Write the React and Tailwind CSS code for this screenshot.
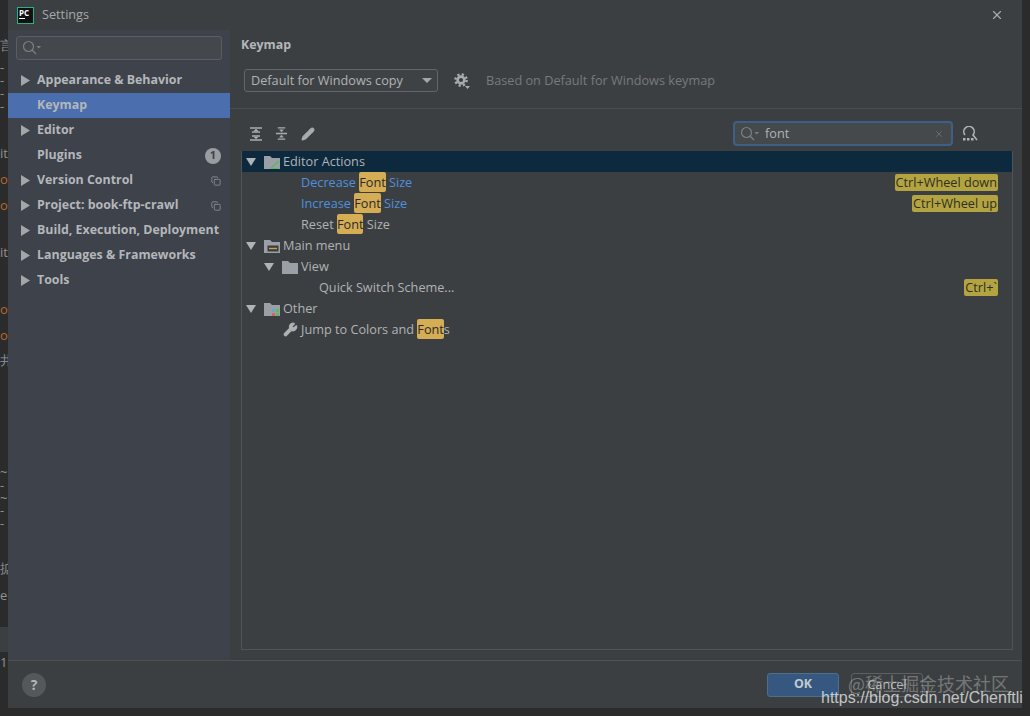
import React from 'react';
import { Copy, Pencil, Wrench, X } from 'lucide-react';

const FONT = { fontFamily: '"Open Sans", "Noto Sans", sans-serif' };

const sideItems = [
  { label: 'Appearance & Behavior', arrow: true },
  { label: 'Keymap', active: true },
  { label: 'Editor', arrow: true },
  { label: 'Plugins', badge: '1' },
  { label: 'Version Control', arrow: true, copy: true },
  { label: 'Project: book-ftp-crawl', arrow: true, copy: true },
  { label: 'Build, Execution, Deployment', arrow: true },
  { label: 'Languages & Frameworks', arrow: true },
  { label: 'Tools', arrow: true },
];

// bits of the editor that stick out left of the dialog, top to bottom
const editorBits = [
  { h: 37 },
  { h: 16, text: '言' },
  { h: 8 },
  { h: 13, text: '-' },
  { h: 13, text: '-' },
  { h: 13, text: '-' },
  { h: 13, text: '-' },
  { h: 32 },
  { h: 16, text: 'it' },
  { h: 10 },
  { h: 16, text: 'or', orange: true },
  { h: 10 },
  { h: 16, text: 'oa', orange: true },
  { h: 31 },
  { h: 16, text: 'it' },
  { h: 41 },
  { h: 16, text: 'or', orange: true },
  { h: 10 },
  { h: 16, text: 'oa', orange: true },
  { h: 9 },
  { h: 16, text: '井' },
  { h: 98 },
  { h: 13, text: '~' },
  { h: 13, text: '-' },
  { h: 13, text: '~' },
  { h: 11, text: '-' },
  { h: 14, text: '-' },
  { h: 30 },
  { h: 16, text: '掂' },
  { h: 11 },
  { h: 16, text: 'e' },
  { h: 24 },
  { h: 25, band: true },
  { h: 2 },
  { h: 16, text: '1' },
];

const Caret = ({ className }) => (
  <svg viewBox="0 0 10 10" preserveAspectRatio="none" className={className}>
    <path d="M0 0 L10 0 L5 10 Z" fill="currentColor" />
  </svg>
);

const CaretRight = () => (
  <svg viewBox="0 0 10 12" className="w-[9px] h-[11px] text-[#a4a7aa]">
    <path d="M0 0 L10 6 L0 12 Z" fill="currentColor" />
  </svg>
);

const SearchIcon = () => (
  <svg viewBox="0 0 20 16" className="w-[20px] h-[16px] text-[#7c7f82]" fill="none">
    <circle cx="6.5" cy="6.5" r="5" stroke="currentColor" strokeWidth="1.2" />
    <path d="M10 10 L14 14" stroke="currentColor" strokeWidth="1.2" />
    <path d="M14.5 6 L19 6 L16.75 8.5 Z" fill="currentColor" />
  </svg>
);

const FolderIcon = ({ children }) => (
  <svg viewBox="0 0 16 14" className="w-[16px] h-[14px]">
    <path d="M0 1 H6 L8 3 H16 V14 H0 Z" fill="#9aa0a6" />
    {children}
  </svg>
);

const Hl = ({ children }) => (
  <span className="bg-[#d4ad54] text-[#2b2b2b] rounded-[2px] py-[1px]">{children}</span>
);

const Row = ({ selected, arrowAt, iconAt, textAt, icon, children, shortcut }) => (
  <div className={`flex items-center h-[21px] ${selected ? 'bg-[#0d293e]' : ''}`}>
    <div className="w-[8px] shrink-0" style={{ marginLeft: arrowAt }}>
      {arrowAt !== undefined && <Caret className="w-[10px] h-[8px] text-[#b0b3b6]" />}
    </div>
    <div className="shrink-0 flex items-center" style={{ marginLeft: iconAt }}>{icon}</div>
    <div className="whitespace-nowrap text-[12.7px]" style={{ marginLeft: textAt }}>{children}</div>
    {shortcut && (
      <span className="ml-auto mr-[14px] bg-[#b3a441] text-[#2f2f22] text-[12.7px] leading-[17px] px-[1px] rounded-[2px]">
        {shortcut}
      </span>
    )}
  </div>
);

function EditorStrip() {
  return (
    <div className="w-[8px] shrink-0 bg-[#2b2b2b] overflow-hidden flex flex-col text-[13px] text-[#8f9194]">
      {editorBits.map((b, i) => (
        <div
          key={i}
          style={{ height: b.h }}
          className={`shrink-0 flex items-center whitespace-nowrap leading-none ${b.band ? 'bg-[#3c3f41]' : ''} ${b.orange ? 'text-[#b5682d]' : ''}`}
        >
          {b.text}
        </div>
      ))}
    </div>
  );
}

function Sidebar() {
  return (
    <aside className="w-[222px] shrink-0 bg-[#3e424b] flex flex-col">
      <div className="mx-[8px] mt-[6px] mb-[8px] h-[24px] border border-[#5a5e62] rounded-[3px] bg-[#44484c] flex items-center pl-[5px]">
        <SearchIcon />
      </div>
      {sideItems.map((it) => (
        <div
          key={it.label}
          className={`h-[25px] flex items-center pl-[13px] pr-[9px] font-bold text-[12.4px] text-[#b4b7ba] ${it.active ? 'bg-[#4b6eaf]' : ''}`}
        >
          <div className="w-[16px] shrink-0">{it.arrow && <CaretRight />}</div>
          <span className="whitespace-nowrap">{it.label}</span>
          {it.badge && (
            <span className="ml-auto w-[16px] h-[16px] rounded-full bg-[#9a9da0] text-[#3e424b] text-[11px] flex items-center justify-center">
              {it.badge}
            </span>
          )}
          {it.copy && <Copy size={10} className="ml-auto text-[#8f9296]" />}
        </div>
      ))}
    </aside>
  );
}

function Tree() {
  return (
    <div className="ml-[11px] mr-[9px] flex-1 border-x border-b border-[#515355] text-[#b0b3b6]">
      <Row
        selected
        arrowAt={4}
        iconAt={10}
        textAt={3}
        icon={
          <FolderIcon>
            <path d="M7 13 L15 6" stroke="#5fb760" strokeWidth="1.6" />
            <path d="M7 13.5 H15" stroke="#5fb760" strokeWidth="1" />
          </FolderIcon>
        }
      >
        Editor Actions
      </Row>
      <Row textAt={51} shortcut="Ctrl+Wheel down">
        <span className="text-[#4f8fdf]">Decrease </span><Hl>Font</Hl><span className="text-[#4f8fdf]"> Size</span>
      </Row>
      <Row textAt={51} shortcut="Ctrl+Wheel up">
        <span className="text-[#4f8fdf]">Increase </span><Hl>Font</Hl><span className="text-[#4f8fdf]"> Size</span>
      </Row>
      <Row textAt={51}>Reset <Hl>Font</Hl> Size</Row>
      <Row
        arrowAt={4}
        iconAt={10}
        textAt={3}
        icon={
          <FolderIcon>
            <rect x="3" y="6" width="12" height="7" fill="#3c3f41" stroke="#9aa0a6" strokeWidth="1" />
            <path d="M5 9.5 H13" stroke="#c9a24a" strokeWidth="1.4" />
          </FolderIcon>
        }
      >
        Main menu
      </Row>
      <Row arrowAt={22} iconAt={10} textAt={3} icon={<FolderIcon />}>View</Row>
      <Row textAt={69} shortcut="Ctrl+`">Quick Switch Scheme...</Row>
      <Row
        arrowAt={4}
        iconAt={10}
        textAt={3}
        icon={
          <FolderIcon>
            <rect x="8" y="7" width="3" height="3" fill="#5fa8d3" />
            <rect x="12" y="7" width="3" height="3" fill="#5fb760" />
            <rect x="8" y="11" width="3" height="3" fill="#d9634c" />
            <rect x="12" y="11" width="3" height="3" fill="#5fb760" />
          </FolderIcon>
        }
      >
        Other
      </Row>
      <Row
        iconAt={33}
        textAt={3}
        icon={<Wrench size={15} className="text-[#aeb1b4] fill-[#aeb1b4]" />}
      >
        Jump to Colors and <Hl>Font</Hl>s
      </Row>
    </div>
  );
}

function Content() {
  return (
    <main className="flex-1 flex flex-col min-w-0 pb-[10px]">
      <div className="h-[30px] flex items-center pl-[11px] font-bold text-[12.4px] text-[#b4b7ba]">Keymap</div>
      <div className="flex items-center pl-[14px] pt-[9px] h-[32px] shrink-0">
        <div className="w-[194px] h-[23px] border border-[#62666a] rounded-[3px] bg-[#3f4244] flex items-center pl-[6px] pr-[5px] text-[12.7px] text-[#b0b3b6]">
          Default for Windows copy
          <Caret className="ml-auto w-[10px] h-[5px] text-[#a4a7aa]" />
        </div>
        <svg viewBox="0 0 18 18" className="ml-[15px] w-[18px] h-[18px] text-[#a9acaf]" fill="none" stroke="currentColor">
          <circle cx="8" cy="8" r="3.4" strokeWidth="2.6" />
          <circle cx="8" cy="8" r="5.6" strokeWidth="2.4" strokeDasharray="2.2 2.2" />
          <path d="M12 14 H17 L14.5 17 Z" fill="currentColor" stroke="none" />
        </svg>
        <span className="ml-[15px] text-[12.7px] text-[#787a7c]">Based on Default for Windows keymap</span>
      </div>
      <div className="mt-[16px] border-t border-[#4a4c4e]" />
      <div className="h-[42px] pt-[7px] flex items-center pl-[19px] pr-[44px] shrink-0">
        <svg viewBox="0 0 14 14" className="w-[14px] h-[14px] text-[#a9acaf]" fill="none" stroke="currentColor" strokeWidth="1.4">
          <path d="M1 1 H13 M1 13 H13 M3 5 H11 M3 9 H11" />
          <path d="M7 2 L5 4 H9 Z M7 12 L5 10 H9 Z" fill="currentColor" strokeWidth="0.5" />
        </svg>
        <svg viewBox="0 0 14 14" className="ml-[12px] w-[13px] h-[13px] text-[#a9acaf]" fill="none" stroke="currentColor" strokeWidth="1.4">
          <path d="M1 7 H13 M3 1 H11 M3 13 H11" />
          <path d="M7 5.5 L5 3 H9 Z M7 8.5 L5 11 H9 Z" fill="currentColor" strokeWidth="0.5" />
        </svg>
        <Pencil size={14} className="ml-[13px] text-[#a9acaf] fill-[#a9acaf]" />
        <div className="ml-auto w-[220px] h-[25px] border-2 border-[#3d6185] rounded-[4px] bg-[#45494b] flex items-center pl-[5px] pr-[7px] text-[12.7px] text-[#b0b3b6]">
          <SearchIcon />
          <span className="ml-[5px]">font</span>
          <X size={10} className="ml-auto text-[#6f7274]" />
        </div>
        <svg viewBox="0 0 16 16" className="ml-[9px] w-[16px] h-[16px] text-[#b0b3b6]" fill="none" stroke="currentColor" strokeWidth="1.6">
          <path d="M3 9 A5.2 5.2 0 1 1 11 9 L15 14" />
          <rect x="1" y="12" width="2.5" height="2.5" fill="currentColor" stroke="none" />
          <rect x="5" y="12" width="2.5" height="2.5" fill="currentColor" stroke="none" />
          <rect x="9" y="12" width="2.5" height="2.5" fill="currentColor" stroke="none" />
        </svg>
      </div>
      <Tree />
    </main>
  );
}

export default function App() {
  return (
    <div className="w-[1030px] h-[716px] overflow-hidden bg-[#2b2b2b] flex flex-col" style={FONT}>
      <div className="h-[708px] flex shrink-0">
        <EditorStrip />
        <div className="w-[1014px] shrink-0 bg-[#3c3f41] flex flex-col">
          <header className="h-[30px] shrink-0 flex items-center pl-[9px] pr-[18px] text-[12.7px] text-[#a6a9ac]">
            <div className="w-[17px] h-[17px] bg-[#111] border border-[#27b08a] text-white text-[8px] leading-[9px] font-bold pl-[1px]">
              PC
              <div className="w-[6px] h-[1px] mt-[1px] bg-white" />
            </div>
            <span className="ml-[8px]">Settings</span>
            <X size={14} className="ml-auto text-[#a9acaf]" />
          </header>
          <div className="flex-1 flex min-h-0">
            <Sidebar />
            <Content />
          </div>
          <footer className="h-[48px] shrink-0 border-t border-[#4e5052] flex items-center pl-[14px] pr-[99px]">
            <div className="w-[24px] h-[24px] rounded-full bg-[#55585a] text-[#b4b7ba] font-bold text-[14px] flex items-center justify-center">?</div>
            <button className="ml-auto w-[72px] h-[24px] rounded-[3px] bg-[#365880] border border-[#4c708c] text-[#c5cacf] font-bold text-[12.4px]">OK</button>
            <button className="ml-[12px] w-[72px] h-[24px] rounded-[3px] border border-[#5e6164] text-[#b0b3b6] text-[12.7px]">Cancel</button>
          </footer>
        </div>
      </div>
      <div className="absolute left-[848px] top-[672px] text-[18px] leading-[22px] text-white/30" style={{ fontFamily: '"Noto Sans CJK SC", sans-serif' }}>@稀土掘金技术社区</div>
      <div className="absolute left-[821px] top-[688px] text-[16px] leading-[20px] text-white/70" style={{ fontFamily: '"Liberation Sans", sans-serif' }}>https://blog.csdn.net/Chenftli</div>
    </div>
  );
}
